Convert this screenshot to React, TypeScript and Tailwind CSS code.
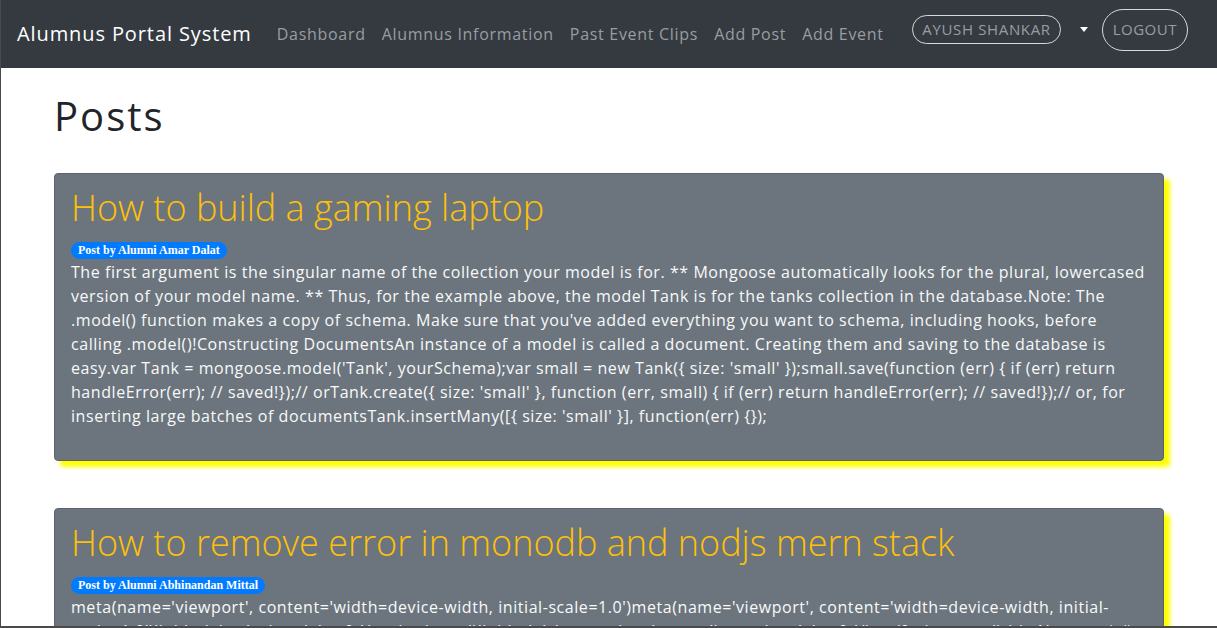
import React from "react"

const posts = [
  {
    title: "How to build a gaming laptop",
    author: "Amar Dalat",
    body: "The first argument is the singular name of the collection your model is for. ** Mongoose automatically looks for the plural, lowercased version of your model name. ** Thus, for the example above, the model Tank is for the tanks collection in the database.Note: The .model() function makes a copy of schema. Make sure that you've added everything you want to schema, including hooks, before calling .model()!Constructing DocumentsAn instance of a model is called a document. Creating them and saving to the database is easy.var Tank = mongoose.model('Tank', yourSchema);var small = new Tank({ size: 'small' });small.save(function (err) { if (err) return handleError(err); // saved!});// orTank.create({ size: 'small' }, function (err, small) { if (err) return handleError(err); // saved!});// or, for inserting large batches of documentsTank.insertMany([{ size: 'small' }], function(err) {});",
  },
  {
    title: "How to remove error in monodb and nodjs mern stack",
    author: "Abhinandan Mittal",
    body: "meta(name='viewport', content='width=device-width, initial-scale=1.0')meta(name='viewport', content='width=device-width, initial-scale=1.0')link(rel='stylesheet', href='/css/style.css')link(rel='shortcut icon', type='image/png', href='/img/favicon.png')title Natours | #{title}",
  },
]

const navLinks = ["Dashboard", "Alumnus Information", "Past Event Clips", "Add Post", "Add Event"]

export default function App() {
  return (
    <div className="h-[628px] overflow-hidden bg-white border-l border-b-2 border-[#4a4a4a] font-['Open_Sans',sans-serif]">
      <nav className="h-[68px] bg-[#343a40] flex items-center pl-[16px] pr-[29px]">
        <a href="#" className="text-white text-[20px] tracking-[0.9px] mr-[17px] whitespace-nowrap">
          Alumnus Portal System
        </a>
        <ul className="flex items-center">
          {navLinks.map((l) => (
            <li key={l}>
              <a href="#" className="block px-[8px] text-[16px] tracking-[0.7px] text-[#9a9da0] whitespace-nowrap">
                {l}
              </a>
            </li>
          ))}
        </ul>
        <div className="ml-auto flex items-center mb-[9px]">
          <button className="h-[29px] px-[9px] rounded-full border border-[#d8d8d8] text-[#9a9da0] text-[15px] tracking-[0.65px] whitespace-nowrap">
            AYUSH SHANKAR
          </button>
          <span className="ml-[19px] mr-[14px] w-0 h-0 border-l-[4px] border-r-[4px] border-t-[5px] border-l-transparent border-r-transparent border-t-white" />
          <button className="h-[42px] px-[10px] rounded-full border border-[#d8d8d8] text-[#9a9da0] text-[15px] tracking-[0.5px]">
            LOGOUT
          </button>
        </div>
      </nav>

      <div className="max-w-[1110px] mx-auto mt-[24px]">
        <h1 className="text-[40px] tracking-[2px] text-[#212529] leading-[1.2] mb-[33px]">Posts</h1>
        {posts.map((p) => (
          <div
            key={p.title}
            className="bg-[#6c757d] border border-[#5c636a] rounded-[4px] shadow-[6px_6px_4px_#ffff00] px-[16px] pt-[12px] pb-[32px] mb-[47px]"
          >
            <h2 className="text-[#ffc107] text-[36px] font-light leading-[1.2] mb-[7px]">{p.title}</h2>
            <span className="inline-block bg-[#007bff] text-white rounded-full px-[7px] text-[12px] leading-[17px] font-bold font-['Liberation_Serif',serif]">
              Post by Alumni {p.author}
            </span>
            <p className="text-[#f8f9fa] text-[16px] tracking-[0.56px] leading-[24px]">{p.body}</p>
          </div>
        ))}
      </div>
    </div>
  )
}
